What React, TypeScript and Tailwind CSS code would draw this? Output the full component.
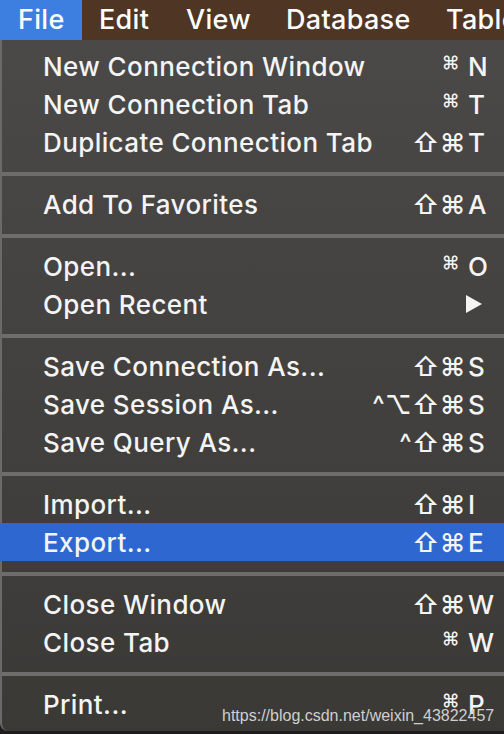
import React from "react";

type Item = {
  label: string;
  mods?: string;
  key?: string;
  small?: boolean;
  arrow?: boolean;
  active?: boolean;
};

const groups: Item[][] = [
  [
    { label: "New Connection Window", mods: "⌘", key: "N", small: true },
    { label: "New Connection Tab", mods: "⌘", key: "T", small: true },
    { label: "Duplicate Connection Tab", mods: "⇧⌘", key: "T" },
  ],
  [{ label: "Add To Favorites", mods: "⇧⌘", key: "A" }],
  [
    { label: "Open...", mods: "⌘", key: "O", small: true },
    { label: "Open Recent", arrow: true },
  ],
  [
    { label: "Save Connection As...", mods: "⇧⌘", key: "S" },
    { label: "Save Session As...", mods: "^⌥⇧⌘", key: "S" },
    { label: "Save Query As...", mods: "^⇧⌘", key: "S" },
  ],
  [
    { label: "Import...", mods: "⇧⌘", key: "I" },
    { label: "Export...", mods: "⇧⌘", key: "E", active: true },
  ],
  [
    { label: "Close Window", mods: "⇧⌘", key: "W" },
    { label: "Close Tab", mods: "⌘", key: "W", small: true },
  ],
  [{ label: "Print...", mods: "⌘", key: "P", small: true }],
];

function Row({ item }: { item: Item }) {
  return (
    <div
      className={`flex items-center h-[38px] pl-[41px] pr-[12px] text-[26px] font-medium tracking-[0.4px] text-[#f4f4f4] ${
        item.active ? "bg-[#2f67d0] -ml-[2px] pl-[43px]" : ""
      }`}
    >
      <span className="flex-1 whitespace-nowrap">{item.label}</span>
      {item.arrow ? (
        <svg width="18" height="18" viewBox="0 0 18 18" className="mr-[9px]">
          <path d="M1 0 L17 9 L1 18 Z" fill="#f4f4f4" />
        </svg>
      ) : (
        <div className="flex items-center">
          <span
            className={`whitespace-nowrap text-right ${
              item.small ? "text-[18px] -mt-[8px] mr-[8px]" : "mr-[2px]"
            }`}
          >
            {item.mods}
          </span>
          <span className="w-[24px] text-left">{item.key}</span>
        </div>
      )}
    </div>
  );
}

export default function App() {
  return (
    <div
      className="w-[504px] h-[734px] overflow-hidden bg-[#1e1e1e] relative"
      style={{ fontFamily: "Inter, 'DejaVu Sans', sans-serif" }}
    >
      <div className="flex h-[40px] bg-[#4f3524] text-[27px] font-medium tracking-[0.3px] text-white whitespace-nowrap">
        <div className="flex items-center shrink-0 w-[82px] pl-[18px] bg-[#3d7fe1]">File</div>
        <div className="flex items-center shrink-0 w-[87px] pl-[17px]">Edit</div>
        <div className="flex items-center shrink-0 w-[100px] pl-[17px]">View</div>
        <div className="flex items-center shrink-0 w-[160px] pl-[17px]">Database</div>
        <div className="flex items-center shrink-0 pl-[17px]">Table</div>
      </div>
      <div className="h-[691px] pt-[7px] border-l-2 border-[#6b6a68] rounded-bl-[8px] bg-gradient-to-b from-[#4a4947] to-[#3b3936]">
        {groups.map((g, i) => (
          <div key={i}>
            {i > 0 && (
              <div className="pt-[11px] pb-[9px]">
                <div className="h-[4px] bg-[#6e6d6b]" />
              </div>
            )}
            {g.map((item) => (
              <Row key={item.label} item={item} />
            ))}
          </div>
        ))}
      </div>
      <div
        className="absolute left-[222px] top-[704px] text-[16px] text-[#cfcfcf] whitespace-nowrap"
        style={{ fontFamily: "'Liberation Sans', Arial, sans-serif" }}
      >
        https://blog.csdn.net/weixin_43822457
      </div>
    </div>
  );
}
